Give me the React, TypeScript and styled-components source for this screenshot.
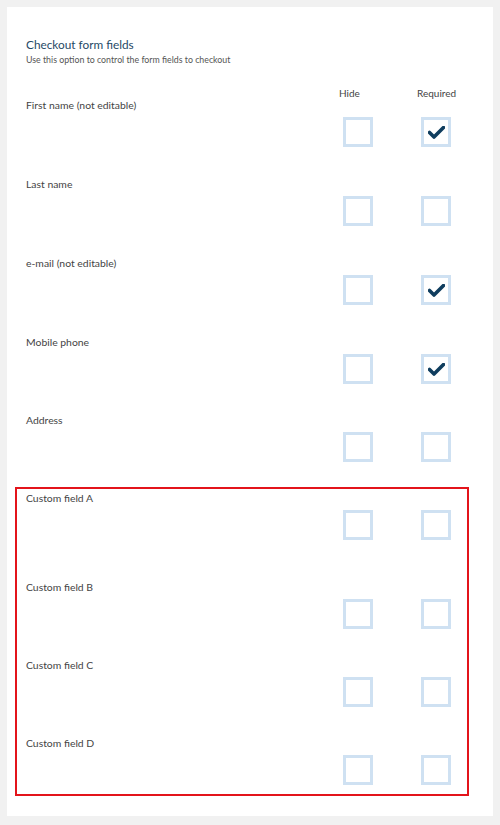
import styled, { createGlobalStyle } from "styled-components";

const GlobalStyle = createGlobalStyle`
  html, body {
    margin: 0;
    padding: 0;
    background: #f1f1f1;
  }
  body {
    font-family: Lato, "Open Sans", sans-serif;
  }
`;

const Page = styled.div`
  padding: 7px;
`;

const Card = styled.section`
  width: 486px;
  background: #ffffff;
  box-sizing: border-box;
  padding: 30px 42px 20px 19px;
`;

const Title = styled.h2`
  margin: 0;
  font-size: 11.8px;
  line-height: 16px;
  font-weight: 400;
  color: #1f4a66;
`;

const Subtitle = styled.p`
  margin: 1px 0 0;
  font-size: 8.8px;
  line-height: 12px;
  color: #555;
`;

const ColumnHeads = styled.div`
  display: flex;
  justify-content: flex-end;
  gap: 48px;
  margin: 21px 0 -1px;
`;

const ColumnHead = styled.span`
  width: 30px;
  margin-left: -4px;
  margin-right: 4px;
  white-space: nowrap;
  font-size: 10px;
  line-height: 12px;
  color: #444;
`;

const Row = styled.div<{ $spaceAbove: number }>`
  margin-top: ${(p) => p.$spaceAbove}px;
`;

const Label = styled.div`
  font-size: 10.4px;
  line-height: 14px;
  color: #444;
`;

const Controls = styled.div`
  display: flex;
  justify-content: flex-end;
  gap: 48px;
  margin-top: 5px;
`;

const Box = styled.div`
  width: 30px;
  height: 30px;
  box-sizing: border-box;
  border: 3px solid #cfe1f2;
  display: flex;
  align-items: center;
  justify-content: center;
`;

const Highlight = styled.div`
  margin: 25px -18px 0 -11px;
  padding: 2px 16px 9px 9px;
  border: 2px solid #e3141b;
`;

const Check = () => (
  <svg width="17" height="13" viewBox="0 0 17 13">
    <path
      d="M1.5 6.5 L6 11 L15.5 1.5"
      fill="none"
      stroke="#0f3d5e"
      strokeWidth="3.6"
      strokeLinecap="round"
      strokeLinejoin="round"
    />
  </svg>
);

type Field = {
  label: string;
  hide: boolean;
  required: boolean;
  space: number;
};

const standard: Field[] = [
  { label: "First name (not editable)", hide: false, required: true, space: 0 },
  { label: "Last name", hide: false, required: false, space: 30 },
  { label: "e-mail (not editable)", hide: false, required: true, space: 30 },
  { label: "Mobile phone", hide: false, required: true, space: 30 },
  { label: "Address", hide: false, required: false, space: 29 },
];

const custom: Field[] = [
  { label: "Custom field A", hide: false, required: false, space: 0 },
  { label: "Custom field B", hide: false, required: false, space: 40 },
  { label: "Custom field C", hide: false, required: false, space: 29 },
  { label: "Custom field D", hide: false, required: false, space: 29 },
];

const FieldRow = ({ field }: { field: Field }) => (
  <Row $spaceAbove={field.space}>
    <Label>{field.label}</Label>
    <Controls>
      <Box>{field.hide && <Check />}</Box>
      <Box>{field.required && <Check />}</Box>
    </Controls>
  </Row>
);

const App = () => (
  <Page>
    <GlobalStyle />
    <Card>
      <Title>Checkout form fields</Title>
      <Subtitle>Use this option to control the form fields to checkout</Subtitle>
      <ColumnHeads>
        <ColumnHead>Hide</ColumnHead>
        <ColumnHead>Required</ColumnHead>
      </ColumnHeads>
      {standard.map((f) => (
        <FieldRow key={f.label} field={f} />
      ))}
      <Highlight>
        {custom.map((f) => (
          <FieldRow key={f.label} field={f} />
        ))}
      </Highlight>
    </Card>
  </Page>
);

export default App;
